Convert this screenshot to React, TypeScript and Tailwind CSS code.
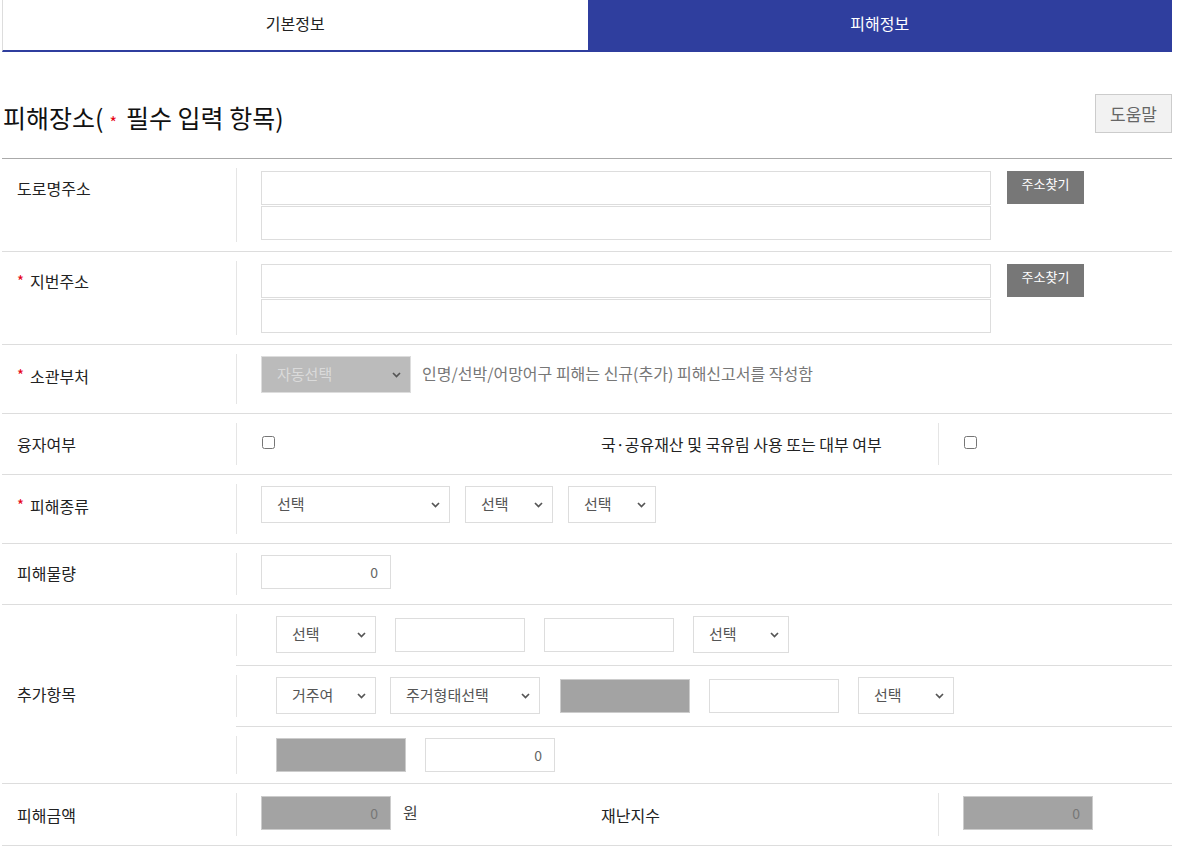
import React from "react"

function Star() {
  return <span className="mr-[6px] text-[15px] text-[#e60012]">*</span>
}

function Chevron() {
  return (
    <svg width="9" height="6" viewBox="0 0 9 6" className="shrink-0">
      <path d="M1 1l3.5 3.5L8 1" fill="none" stroke="#555" strokeWidth="1.7" />
    </svg>
  )
}

function Select({ label, className = "", disabled = false }: { label: string; className?: string; disabled?: boolean }) {
  return (
    <div
      className={`flex h-[37px] shrink-0 items-center justify-between border border-[#ddd] pl-[15px] pr-[9px] text-[15px] ${
        disabled ? "bg-[#bbb] text-[#dadada]" : "bg-white text-[#555]"
      } ${className}`}
    >
      <span>{label}</span>
      <Chevron />
    </div>
  )
}

function Field({ className = "", value, gray = false }: { className?: string; value?: string; gray?: boolean }) {
  return (
    <input
      readOnly
      value={value ?? ""}
      className={`h-[34px] shrink-0 border px-[12px] text-right text-[14px] outline-none ${
        gray ? "border-[#ccc] bg-[#a3a3a3] text-[#777]" : "border-[#ddd] bg-white text-[#666]"
      } ${className}`}
    />
  )
}

function Label({ children, req = false, className = "" }: { children: React.ReactNode; req?: boolean; className?: string }) {
  return (
    <div className={`flex w-[234px] shrink-0 items-center pl-[15px] text-[16px] text-[#222] ${className}`}>
      {req && <Star />}
      {children}
    </div>
  )
}

function Box() {
  return <input type="checkbox" className="h-[13px] w-[13px]" />
}

export default function App() {
  return (
    <div className="min-h-[847px] w-[1178px] bg-white font-['Noto_Sans_CJK_KR',sans-serif]">
      {/* tabs */}
      <div className="ml-[2px] flex w-[1170px]">
        <div className="flex h-[52px] flex-1 items-center justify-center border-b-2 border-l border-b-[#2f3e9e] border-l-[#ddd] pb-[4px] text-[16px] text-[#222]">
          기본정보
        </div>
        <div className="flex h-[52px] flex-1 items-center justify-center bg-[#2f3e9e] pb-[6px] text-[16px] text-white">
          피해정보
        </div>
      </div>

      <div className="ml-[2px] w-[1170px]">
        {/* title */}
        <div className="mt-[42px] flex h-[65px] items-start justify-between border-b border-[#aaa]">
          <h2 className="mt-[6px] flex h-[34px] items-center pl-[1px] text-[25px] leading-[34px] text-[#111]">
            피해장소(<span className="ml-[6px] mr-[9px] mt-[10px] text-[16px] text-[#e60012]">*</span>필수 입력 항목)
          </h2>
          <button className="h-[39px] w-[77px] border border-[#ccc] bg-[#f2f2f2] text-[17px] text-[#666]">도움말</button>
        </div>

        {/* 도로명주소 */}
        <div className="flex border-b border-[#ddd] py-[9px]">
          <Label className="h-[37px] self-start pt-[3px]">도로명주소</Label>
          <div className="flex flex-1 gap-[16px] border-l border-[#e5e5e5] pb-[2px] pl-[24px] pt-[3px]">
            <div className="flex w-[730px] flex-col gap-px">
              <Field />
              <Field />
            </div>
            <button className="h-[33px] w-[77px] bg-[#777] pb-[8px] text-[13px] text-white">주소찾기</button>
          </div>
        </div>

        {/* 지번주소 */}
        <div className="flex border-b border-[#ddd] py-[9px]">
          <Label req className="h-[37px] self-start pt-[3px]">
            지번주소
          </Label>
          <div className="flex flex-1 gap-[16px] border-l border-[#e5e5e5] pb-[2px] pl-[24px] pt-[3px]">
            <div className="flex w-[730px] flex-col gap-px">
              <Field />
              <Field />
            </div>
            <button className="h-[33px] w-[77px] bg-[#777] pb-[8px] text-[13px] text-white">주소찾기</button>
          </div>
        </div>

        {/* 소관부처 */}
        <div className="flex border-b border-[#ddd] py-[9px]">
          <Label req className="h-[41px] self-start pt-[2px]">
            소관부처
          </Label>
          <div className="flex flex-1 items-start gap-[11px] border-l border-[#e5e5e5] pb-[11px] pl-[24px] pt-[2px]">
            <Select label="자동선택" disabled className="w-[150px]" />
            <span className="pt-[5px] text-[16px] text-[#777]">인명/선박/어망어구 피해는 신규(추가) 피해신고서를 작성함</span>
          </div>
        </div>

        {/* 융자여부 */}
        <div className="flex border-b border-[#ddd] py-[9px]">
          <Label>융자여부</Label>
          <div className="flex h-[42px] w-[350px] items-center border-l border-[#e5e5e5] pb-[4px] pl-[25px]">
            <Box />
          </div>
          <div className="flex w-[352px] items-center pl-[15px] text-[16px] text-[#222]">
            국·공유재산 및 국유림 사용 또는 대부 여부
          </div>
          <div className="flex h-[42px] flex-1 items-center border-l border-[#e5e5e5] pb-[4px] pl-[25px]">
            <Box />
          </div>
        </div>

        {/* 피해종류 */}
        <div className="flex border-b border-[#ddd] py-[9px]">
          <Label req className="h-[41px] self-start pt-[2px]">
            피해종류
          </Label>
          <div className="flex flex-1 items-start gap-[15px] border-l border-[#e5e5e5] pb-[11px] pl-[24px] pt-[2px]">
            <Select label="선택" className="w-[189px]" />
            <Select label="선택" className="w-[88px]" />
            <Select label="선택" className="w-[88px]" />
          </div>
        </div>

        {/* 피해물량 */}
        <div className="flex border-b border-[#ddd] py-[9px]">
          <Label className="h-[38px] self-start pt-[2px]">피해물량</Label>
          <div className="flex flex-1 border-l border-[#e5e5e5] pb-[6px] pl-[24px] pt-[2px]">
            <Field value="0" className="w-[130px]" />
          </div>
        </div>

        {/* 추가항목 */}
        <div className="flex border-b border-[#ddd]">
          <Label>추가항목</Label>
          <div className="flex flex-1 flex-col">
            <div className="flex border-b border-[#ddd] py-[9px]">
              <div className="flex flex-1 items-center gap-[19px] border-l border-[#e5e5e5] pb-[3px] pl-[39px] pt-[2px]">
                <Select label="선택" className="w-[100px]" />
                <Field className="w-[130px]" />
                <Field className="w-[130px]" />
                <Select label="선택" className="w-[96px]" />
              </div>
            </div>
            <div className="flex border-b border-[#ddd] py-[9px]">
              <div className="flex flex-1 items-center border-l border-[#e5e5e5] pb-[3px] pl-[39px] pt-[2px]">
                <Select label="거주여" className="w-[100px]" />
                <Select label="주거형태선택" className="ml-[14px] w-[150px]" />
                <Field gray className="ml-[20px] w-[130px]" />
                <Field className="ml-[19px] w-[130px]" />
                <Select label="선택" className="ml-[19px] w-[96px]" />
              </div>
            </div>
            <div className="flex py-[9px]">
              <div className="flex flex-1 items-start gap-[19px] border-l border-[#e5e5e5] pb-[2px] pl-[39px] pt-[2px]">
                <Field gray className="w-[130px]" />
                <Field value="0" className="w-[130px]" />
              </div>
            </div>
          </div>
        </div>

        {/* 피해금액 */}
        <div className="flex border-b border-[#ddd] py-[9px]">
          <Label>피해금액</Label>
          <div className="flex h-[43px] w-[350px] items-start gap-[12px] border-l border-[#e5e5e5] pl-[24px] pt-[3px]">
            <Field gray value="0" className="w-[130px]" />
            <span className="pt-[4px] text-[16px] text-[#444]">원</span>
          </div>
          <div className="flex w-[352px] items-center pl-[15px] text-[16px] text-[#222]">재난지수</div>
          <div className="flex h-[43px] flex-1 items-start border-l border-[#e5e5e5] pl-[24px] pt-[3px]">
            <Field gray value="0" className="w-[130px]" />
          </div>
        </div>
      </div>
    </div>
  )
}
